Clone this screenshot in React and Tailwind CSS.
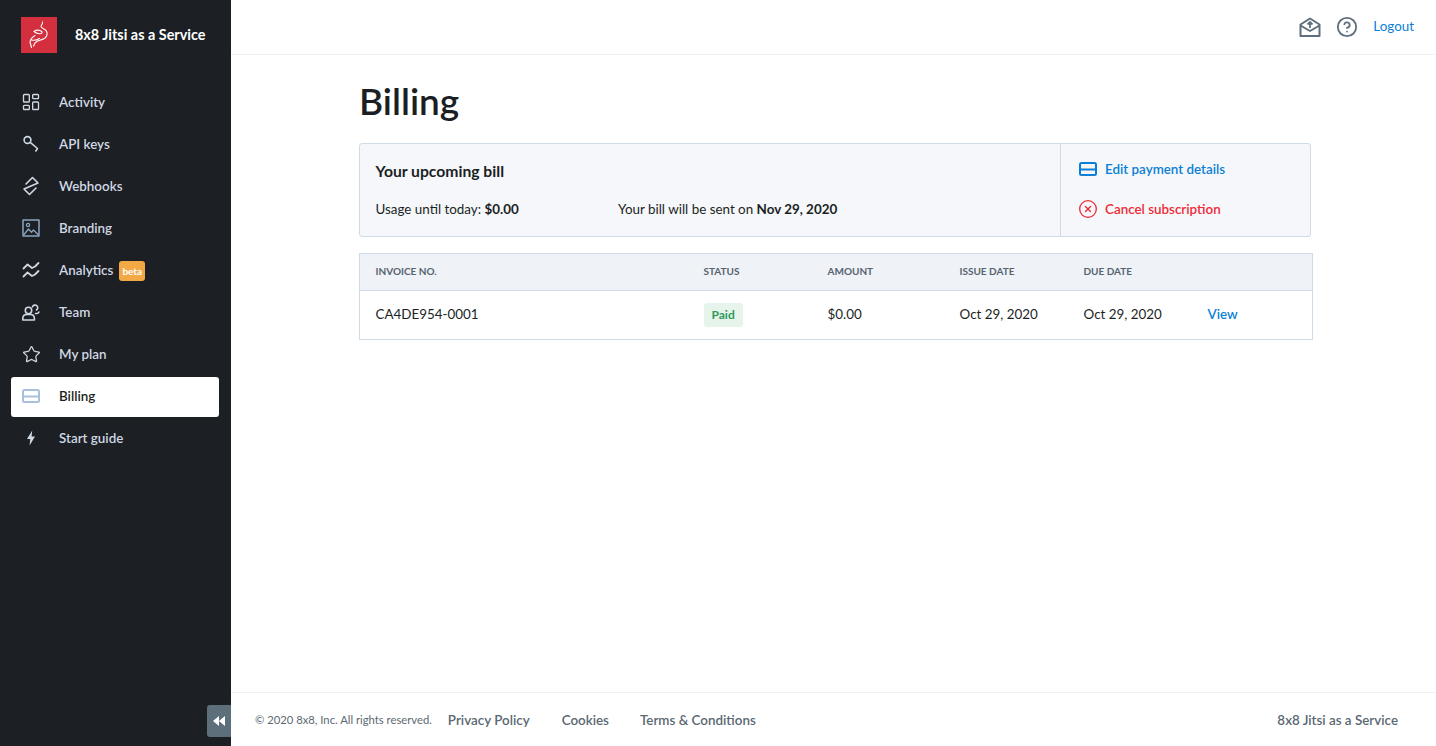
import { LayoutDashboard, Star, CircleHelp, CircleX } from 'lucide-react'

const stroke = { fill: 'none', stroke: 'currentColor', strokeWidth: 1.6, strokeLinecap: 'round', strokeLinejoin: 'round' }

function KeyIcon() {
  return (
    <svg width="20" height="20" viewBox="0 0 20 20" {...stroke}>
      <circle cx="6.5" cy="6" r="3.4" />
      <path d="M9.2 8.4 16.5 14.5 14.8 17" />
    </svg>
  )
}

function HookIcon() {
  return (
    <svg width="20" height="20" viewBox="0 0 20 20" {...stroke}>
      <path d="M5 8 11.500 1.500 17 7 3 13l5.500 5.500L15 12" />
    </svg>
  )
}

function ImageIcon() {
  return (
    <svg width="18" height="18" viewBox="0 0 18 18" {...stroke} className="text-[#8ba4bd]">
      <rect x="1" y="1" width="16" height="16" strokeWidth="1.5" />
      <circle cx="6" cy="6" r="1.6" strokeWidth="1.3" />
      <path d="M2 15.5 6.5 10l3 3.2 2-2.2 4.500 4.500" strokeWidth="1.3" />
    </svg>
  )
}

function ChartIcon() {
  return (
    <svg width="20" height="18" viewBox="0 0 20 18" {...stroke} strokeWidth="1.8">
      <path d="M2.500 7.500 6.500 3.500 11 7 14 5.500 17.500 2" />
      <path d="M2.500 15.500 6.500 11.500 11 15 14 13.500 17.500 10" />
    </svg>
  )
}

function TeamIcon() {
  return (
    <svg width="20" height="20" viewBox="0 0 20 20" {...stroke}>
      <circle cx="7.5" cy="8.5" r="3.2" />
      <path d="M1.8 18v-1.8a4 4 0 0 1 4-3.7h3.6a4 4 0 0 1 4 3.700V18Z" />
      <path d="M11.500 4.800a2.700 2.700 0 1 1 4 3.200M14.500 11.500h1a2.500 2.500 0 0 0 2.500-1.500" />
    </svg>
  )
}

function CardIcon({ className }) {
  return (
    <svg width="18" height="14" viewBox="0 0 18 14" fill="none" stroke="currentColor" strokeWidth="2" className={className}>
      <rect x="1" y="1" width="16" height="12" rx="1.5" />
      <path d="M1 7.500h16" />
    </svg>
  )
}

function BoltIcon() {
  return (
    <svg width="10" height="16" viewBox="0 0 10 16" fill="currentColor">
      <path d="M6.2 0.5 1 9h3.2L3.6 15.5 9 6.6H5.6Z" />
    </svg>
  )
}

function MailIcon() {
  return (
    <svg width="22" height="20" viewBox="0 0 22 20" fill="none" stroke="#5f6f7d" strokeWidth="2" strokeLinejoin="round">
      <path d="M1.5 7.5 11 1.5l9.5 6V19h-19Z" />
      <path d="M1.5 8.500 11 14l9.500-5.500" />
      <path d="M11 11V5.500M8.500 7.500 11 5l2.500 2.500" strokeWidth="1.8" />
    </svg>
  )
}

function Logo() {
  return (
    <div className="flex h-9 w-9 items-center justify-center bg-[#d32f3f]">
      <svg width="22" height="28" viewBox="0 0 22 28" fill="none" stroke="#fff" strokeWidth="1.1" strokeLinecap="round" strokeLinejoin="round">
        <path d="M14.500 1c.5 2-1.500 3-1.500 4.500 0 1 1 1.500 2.500 2.200 2.500 1.200 4 3.200 3.500 6-.4 2.500-3 4.500-6 5.200-2 .5-4.500 1-6 3l-1.500 3" />
        <path d="M6 10.500c2-1.500 5-1.500 7-.5 1.500.8 1.500 2 0 2.500-2 .5-5-.2-7-2Z" />
        <path d="M7 14.500c-2.500 1.500-4.500 4-5 6.500l1.500 5.500M3.500 19c2 .5 5.500 0 8-1.500" />
      </svg>
    </div>
  )
}

const navItems = [
  { label: 'Activity', icon: <LayoutDashboard size={20} strokeWidth={1.6} /> },
  { label: 'API keys', icon: <KeyIcon /> },
  { label: 'Webhooks', icon: <HookIcon /> },
  { label: 'Branding', icon: <ImageIcon /> },
  { label: 'Analytics', icon: <ChartIcon />, beta: true },
  { label: 'Team', icon: <TeamIcon /> },
  { label: 'My plan', icon: <Star size={19} strokeWidth={1.6} /> },
  { label: 'Billing', icon: <CardIcon className="text-[#a9c0dc]" />, active: true },
  { label: 'Start guide', icon: <BoltIcon /> },
]

const invoiceCols = 'grid grid-cols-[328px_124px_132px_124px_124px_1fr] items-center pl-[15.5px]'

export default function App() {
  return (
    <div className="relative flex h-screen overflow-hidden bg-white font-['Lato',sans-serif] text-[13.4px] text-[#1b1f23]">
      {/* Sidebar */}
      <aside className="relative flex w-[231px] shrink-0 flex-col bg-[#1c1f24]">
        <div className="flex items-center gap-[18px] pl-[21px] pt-[17px]">
          <Logo />
          <span className="text-[14.4px] font-bold text-white">8x8 Jitsi as a Service</span>
        </div>
        <nav className="mt-[30px] flex flex-col gap-[2px] pr-[12px] pl-[11px]">
          {navItems.map((item) => (
            <a
              key={item.label}
              className={`flex h-10 items-center rounded-[3px] pb-[2px] font-semibold ${item.active ? 'bg-white text-[#1b1f23]' : 'text-[#cfd8e3]'}`}
            >
              <span className="flex w-[48px] justify-center pr-[8px]">{item.icon}</span>
              {item.label}
              {item.beta && (
                <span className="mt-[2px] ml-[6px] rounded-[3px] bg-[#f2a945] px-[3px] text-[10px] leading-[20px] font-bold text-white">beta</span>
              )}
            </a>
          ))}
        </nav>
        <button className="absolute right-0 bottom-[9px] flex h-8 w-6 items-center justify-center rounded-l-[3px] bg-[#5d6f7b] text-white">
          <svg width="12" height="10" viewBox="0 0 12 10" fill="currentColor">
            <path d="M6 0v10L0 5ZM12 0v10L6 5Z" />
          </svg>
        </button>
      </aside>

      <div className="flex min-w-0 flex-1 flex-col">
        {/* Top bar */}
        <header className="flex h-[55px] shrink-0 items-center justify-end border-b border-[#f0f1f5] pr-[22px]">
          <MailIcon />
          <span className="ml-[15px] text-[#5f6f7d]">
            <CircleHelp size={22} strokeWidth={2} />
          </span>
          <a className="ml-[15px] pb-[1px] text-[#0b7fd6]">Logout</a>
        </header>

        <main className="flex-1 pl-[128px]">
          <h1 className="mt-[21px] text-[37px] leading-[50px] font-semibold text-[#1b1f23]">Billing</h1>

          {/* Upcoming bill */}
          <section className="mt-[17px] flex h-[94px] w-[952px] rounded-[3px] border border-[#cfdbe6] bg-[#f5f7fa]">
            <div className="flex-1 pl-[15.5px]">
              <h2 className="mt-[16px] text-[15.7px] leading-[22px] font-bold">Your upcoming bill</h2>
              <div className="mt-[17px] flex leading-[20px]">
                <p className="w-[242.5px]">
                  Usage until today: <b>$0.00</b>
                </p>
                <p>
                  Your bill will be sent on <b>Nov 29, 2020</b>
                </p>
              </div>
            </div>
            <div className="flex w-[250px] flex-col gap-[20px] border-l border-[#cfdbe6] pt-[15px] pl-[18px] font-semibold">
              <a className="flex h-5 items-center gap-[8px] text-[#0b7fd6]">
                <CardIcon />
                <span>Edit payment details</span>
              </a>
              <a className="flex h-5 items-center gap-[7px] text-[#ee2b37]">
                <CircleX size={20} strokeWidth={1.6} className="-ml-[1px]" />
                <span>Cancel subscription</span>
              </a>
            </div>
          </section>

          {/* Invoices */}
          <section className="mt-[16px] w-[954px] border border-[#cfdbe6]">
            <div className={`${invoiceCols} h-[37px] border-b border-[#cfdbe6] bg-[#eff2f7] pb-[2px] text-[10px] font-bold text-[#56646f] uppercase`}>
              <span>Invoice no.</span>
              <span>Status</span>
              <span>Amount</span>
              <span>Issue date</span>
              <span>Due date</span>
              <span />
            </div>
            <div className={`${invoiceCols} h-[48px] pb-[2px]`}>
              <span>CA4DE954-0001</span>
              <span className="mt-[2px] flex">
                <span className="rounded-[3px] bg-[#e6f4ec] px-[8px] text-[12px] leading-[24px] font-bold text-[#2c9a5b]">Paid</span>
              </span>
              <span>$0.00</span>
              <span>Oct 29, 2020</span>
              <span>Oct 29, 2020</span>
              <a className="font-semibold text-[#0b7fd6]">View</a>
            </div>
          </section>
        </main>

        {/* Footer */}
        <footer className="flex h-[54px] shrink-0 items-center border-t border-[#f0f1f5] pt-[2px] pr-[38px] pl-[24px] text-[#5a6872]">
          <span className="text-[11.25px]">© 2020 8x8, Inc. All rights reserved.</span>
          <a className="ml-[16px] font-semibold">Privacy Policy</a>
          <a className="ml-[32px] font-semibold">Cookies</a>
          <a className="ml-[31px] font-semibold">Terms &amp; Conditions</a>
          <span className="ml-auto font-semibold">8x8 Jitsi as a Service</span>
        </footer>
      </div>
    </div>
  )
}
